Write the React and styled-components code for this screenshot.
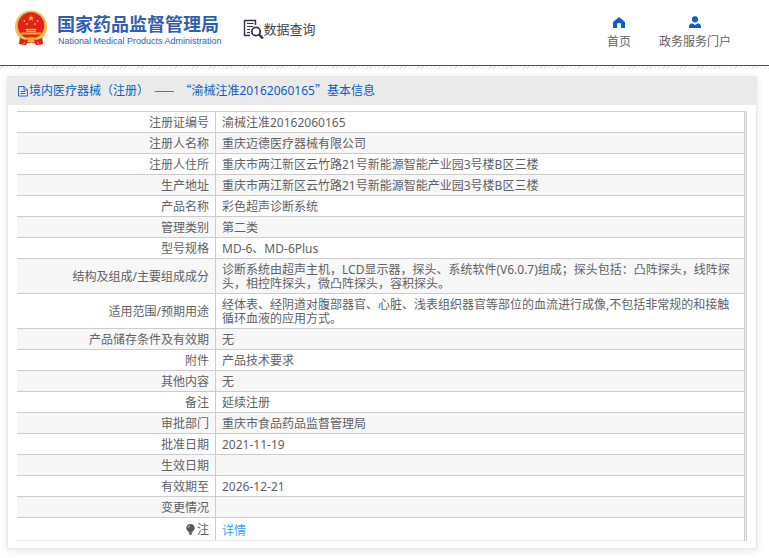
import React from "react";
import styled, { createGlobalStyle } from "styled-components";

const GlobalStyle = createGlobalStyle`
    body {
        margin: 0;
        background: #fff;
        color: #606266;
        font-family: "Noto Sans", "Noto Sans CJK SC", sans-serif;
        font-size: 12px;
        line-height: 14px;
    }
`;

const Header = styled.header`
    display: flex;
    align-items: flex-start;
    height: 65px;
    padding: 0 38px 0 14px;
    border-bottom: 1px solid #0a5bb8;
`;

const Stripes = styled.div`
    height: 3px;
    background: repeating-linear-gradient(135deg, #fff 0 2px, #e4e4e4 2px 3px);
`;

const Brand = styled.a`
    display: flex;
    gap: 9px;
    padding-top: 10px;
    color: #2f5fb3;
    text-decoration: none;
`;

const BrandText = styled.span`
    display: flex;
    flex-flow: column;
    gap: 2px;
    padding-top: 3px;
`;

const BrandName = styled.span`
    font-family: "Noto Sans CJK SC", sans-serif;
    font-size: 18px;
    font-weight: 700;
    line-height: 20px;
`;

const BrandSub = styled.span`
    padding-left: 1px;
    font-family: "Liberation Sans", sans-serif;
    font-size: 9px;
    line-height: 12px;
`;

const Section = styled.div`
    display: flex;
    align-items: center;
    padding: 19px 0 0 21px;
    color: #444;
    font-size: 13px;
    line-height: 20px;
`;

const Nav = styled.nav`
    display: flex;
    gap: 28px;
    margin-left: auto;
    padding-top: 16px;
`;

const NavLink = styled.a`
    display: flex;
    flex-flow: column;
    align-items: center;
    gap: 6px;
    color: #606266;
    text-decoration: none;
`;

const Panel = styled.main`
    margin: 7px 12px 9px 7px;
    border: 1px solid #e8e8ea;
    box-shadow: 0 2px 8px rgba(0, 0, 0, 0.1);
`;

const PanelTitle = styled.h1`
    display: flex;
    align-items: center;
    margin: 0;
    padding: 6px 9px 7px;
    background: #eaeaea;
    color: #0b5fc4;
    font-size: 12px;
    font-weight: 400;
    line-height: 14px;
`;

const Quote = styled.span`
    font-family: "Noto Sans CJK SC", sans-serif;
`;

const Dash = styled(Quote)`
    padding: 0 2px;
`;

const TableFrame = styled.div`
    margin: 6px 9px 7px 9px;
    padding-right: 1px;
    border-right: 1px solid #ccc;
    background: #f0f0f3;
`;

const Table = styled.table`
    width: 100%;
    border-collapse: separate;
    border-spacing: 0;
    border-top: 1px solid #ccc;
    border-right: 1px solid #ccc;
    background: #fff;
`;

const Row = styled.tr`
    background: ${(props) => (props.$striped ? "#f7f7f7" : "#fff")};
`;

const Label = styled.th`
    width: 186px;
    padding: 4px 6px 2px;
    border-right: 1px solid #ccc;
    border-bottom: 1px solid ${(props) => (props.$last ? "#e6e6f0" : "#ccc")};
    font-weight: 400;
    text-align: right;
`;

const Value = styled.td`
    height: 14px;
    padding: ${(props) => (props.$last ? "6px 6px 2px" : "4px 6px 2px")};
    border-bottom: 1px solid ${(props) => (props.$last ? "#e6e6f0" : "#ccc")};
`;

const DetailLink = styled.a`
    color: #409eff;
    text-decoration: none;
`;

const BulbIcon = styled.svg`
    margin-right: 2px;
    vertical-align: -1px;
`;

const rows = [
    ["注册证编号", "渝械注准20162060165"],
    ["注册人名称", "重庆迈德医疗器械有限公司"],
    ["注册人住所", "重庆市两江新区云竹路21号新能源智能产业园3号楼B区三楼"],
    ["生产地址", "重庆市两江新区云竹路21号新能源智能产业园3号楼B区三楼"],
    ["产品名称", "彩色超声诊断系统"],
    ["管理类别", "第二类"],
    ["型号规格", "MD-6、MD-6Plus"],
    ["结构及组成/主要组成成分", "诊断系统由超声主机，LCD显示器，探头、系统软件(V6.0.7)组成；探头包括：凸阵探头，线阵探头，相控阵探头，微凸阵探头，容积探头。"],
    ["适用范围/预期用途", "经体表、经阴道对腹部器官、心脏、浅表组织器官等部位的血流进行成像,不包括非常规的和接触循环血液的应用方式。"],
    ["产品储存条件及有效期", "无"],
    ["附件", "产品技术要求"],
    ["其他内容", "无"],
    ["备注", "延续注册"],
    ["审批部门", "重庆市食品药品监督管理局"],
    ["批准日期", "2021-11-19"],
    ["生效日期", ""],
    ["有效期至", "2026-12-21"],
    ["变更情况", ""],
];

const Emblem = () => (
    <svg width="34" height="36" viewBox="0 0 34 36" aria-hidden="true">
        <path d="M6 26 L5 34 L10 35 L14 33 L20 33 L24 35 L29 34 L28 26 Z" fill="#d9231c" />
        <circle cx="17" cy="16.5" r="16" fill="#f0b63a" />
        <circle cx="17" cy="16.5" r="15" fill="none" stroke="#f8d66c" strokeWidth="1" strokeDasharray="2 1" />
        <circle cx="17" cy="15.5" r="13.2" fill="#e3211b" />
        <path d="M17 5 L17.8 7.2 L20.1 7.2 L18.3 8.6 L19 10.9 L17 9.5 L15 10.9 L15.7 8.6 L13.9 7.2 L16.2 7.2 Z" fill="#f6c945" />
        <g fill="#f3b83f">
            <circle cx="10.5" cy="11" r="0.9" />
            <circle cx="13" cy="14" r="0.9" />
            <circle cx="21" cy="14" r="0.9" />
            <circle cx="23.5" cy="11" r="0.9" />
            <path d="M11 20 L12 18.8 H22 L23 20 Z M12 20.6 H22 V22 H12 Z M7 22.5 H27 V24.5 H7 Z" />
        </g>
        <path d="M4 25 Q10 29 17 27 Q24 29 30 25 L27 29 Q22 31 17 29 Q12 31 7 29 Z" fill="#f4c54a" />
        <path d="M6 28 Q12 31 14.5 29 L12 35 L6 34 Z M28 28 Q22 31 19.5 29 L22 35 L28 34 Z" fill="#dd241c" />
        <circle cx="17" cy="30" r="2.5" fill="#f2b437" />
        <path d="M11 32 L9 34.5 M23 32 L25 34.5" stroke="#f2b437" strokeWidth="1" />
    </svg>
);

const SearchDocIcon = () => (
    <svg width="21" height="20" viewBox="0 0 21 20" fill="none" stroke="#30304a" aria-hidden="true">
        <path d="M12.5 6 V1.5 H1.5 V16.5 H7" strokeWidth="1.4" />
        <path d="M4 4.5 H10.5 M4 7.5 H10 M4 10.5 H7 M4 13.5 H7" strokeWidth="1.2" />
        <circle cx="13" cy="12.5" r="4.2" strokeWidth="1.8" />
        <path d="M16 15.5 L20 19.5" strokeWidth="2.4" />
    </svg>
);

const HomeIcon = () => (
    <svg width="12" height="13" viewBox="0 0 12 13" fill="#0b5fc4" aria-hidden="true">
        <path d="M6 1 L12 6 V12 H8 V8 Q8 7 6 7 Q4 7 4 8 V12 H0 V6 Z" />
    </svg>
);

const UserIcon = () => (
    <svg width="12" height="13" viewBox="0 0 12 13" fill="#0b5fc4" aria-hidden="true">
        <circle cx="6" cy="3.3" r="3.1" />
        <path d="M0 12 V10.5 Q0 8 3 7.2 L6 9 L9 7.2 Q12 8 12 10.5 V12 Z" />
    </svg>
);

const DocIcon = () => (
    <svg width="12" height="12" viewBox="0 0 12 12" fill="none" stroke="#2a6fca" aria-hidden="true">
        <path d="M1.5 1.5 H7 L10.5 5 V11 H1.5 Z M7 1.5 V5 H10.5 M3.5 6.5 H8.5 M3.5 8.5 H8.5" />
    </svg>
);

const App = () => {
    return (
        <>
            <GlobalStyle />
            <Header>
                <Brand href="#">
                    <Emblem />
                    <BrandText>
                        <BrandName>国家药品监督管理局</BrandName>
                        <BrandSub>National Medical Products Administration</BrandSub>
                    </BrandText>
                </Brand>
                <Section>
                    <SearchDocIcon />
                    数据查询
                </Section>
                <Nav>
                    <NavLink href="#"><HomeIcon />首页</NavLink>
                    <NavLink href="#"><UserIcon />政务服务门户</NavLink>
                </Nav>
            </Header>
            <Stripes />
            <Panel>
                <PanelTitle>
                    <DocIcon />
                    <span>
                        境内医疗器械（注册） <Dash>——</Dash> <Quote>“</Quote>渝械注准20162060165<Quote>”</Quote>基本信息
                    </span>
                </PanelTitle>
                <TableFrame>
                    <Table>
                        <tbody>
                            {rows.map(([label, value], i) => (
                                <Row key={label} $striped={i % 2 === 1}>
                                    <Label scope="row">{label}</Label>
                                    <Value>{value}</Value>
                                </Row>
                            ))}
                            <Row>
                                <Label scope="row" $last>
                                    <BulbIcon width="9" height="11" viewBox="0 0 10 12" aria-hidden="true">
                                        <path d="M5 0 A4.3 4.3 0 0 1 7.5 8 L7 9.5 H3 L2.5 8 A4.3 4.3 0 0 1 5 0 Z M3.5 10 H6.5 V11 L5.5 12 H4.5 L3.5 11 Z" fill="#55565a" />
                                        <path d="M2.5 4 Q2.7 2.2 4.5 1.8" fill="none" stroke="#fff" strokeWidth="0.8" />
                                    </BulbIcon>
                                    注
                                </Label>
                                <Value $last><DetailLink href="#">详情</DetailLink></Value>
                            </Row>
                        </tbody>
                    </Table>
                </TableFrame>
            </Panel>
        </>
    );
};

export default App;
